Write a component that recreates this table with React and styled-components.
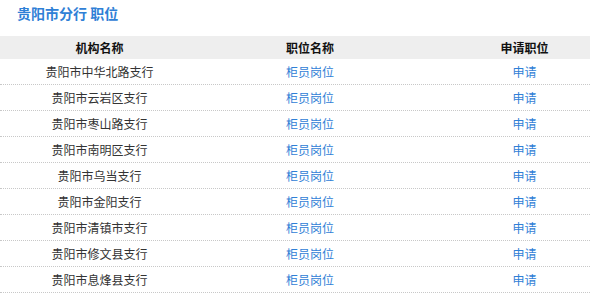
import React from "react";
import styled, { createGlobalStyle } from "styled-components";

const Global = createGlobalStyle`
  html, body { margin: 0; padding: 0; background: #fff; overflow: hidden; }
  body { font-family: "Noto Sans CJK SC", "Liberation Sans", sans-serif; }
`;

const Page = styled.div`
  width: 590px;
  padding-top: 4px;
`;

const Title = styled.h2`
  margin: 0 0 14px 17px;
  font-size: 14px;
  line-height: 18px;
  font-weight: bold;
  color: #2f80d6;
`;

const Row = styled.div`
  display: grid;
  grid-template-columns: 199px 222px 1fr;
  height: ${(p) => (p.$head ? "23px" : "25px")};
  background: ${(p) => (p.$head ? "#eeeeee" : "transparent")};
  border-bottom: ${(p) => (p.$head ? "none" : "1px dotted #c8c8c8")};
`;

const Cell = styled.div`
  display: flex;
  align-items: center;
  justify-content: center;
  padding-left: ${(p) => (p.$last ? "38px" : "0")};
  font-size: 12px;
  font-weight: ${(p) => (p.$head ? "bold" : "normal")};
  color: ${(p) => (p.$link ? "#2f80d6" : p.$head ? "#111" : "#333")};
  cursor: ${(p) => (p.$link ? "pointer" : "default")};
  white-space: nowrap;
`;

const branches = [
  "贵阳市中华北路支行",
  "贵阳市云岩区支行",
  "贵阳市枣山路支行",
  "贵阳市南明区支行",
  "贵阳市乌当支行",
  "贵阳市金阳支行",
  "贵阳市清镇市支行",
  "贵阳市修文县支行",
  "贵阳市息烽县支行",
];

export default function App() {
  return (
    <Page>
      <Global />
      <Title>贵阳市分行 职位</Title>
      <Row $head>
        <Cell $head>机构名称</Cell>
        <Cell $head>职位名称</Cell>
        <Cell $head $last>申请职位</Cell>
      </Row>
      {branches.map((b) => (
        <Row key={b}>
          <Cell>{b}</Cell>
          <Cell $link>柜员岗位</Cell>
          <Cell $link $last>申请</Cell>
        </Row>
      ))}
    </Page>
  );
}
